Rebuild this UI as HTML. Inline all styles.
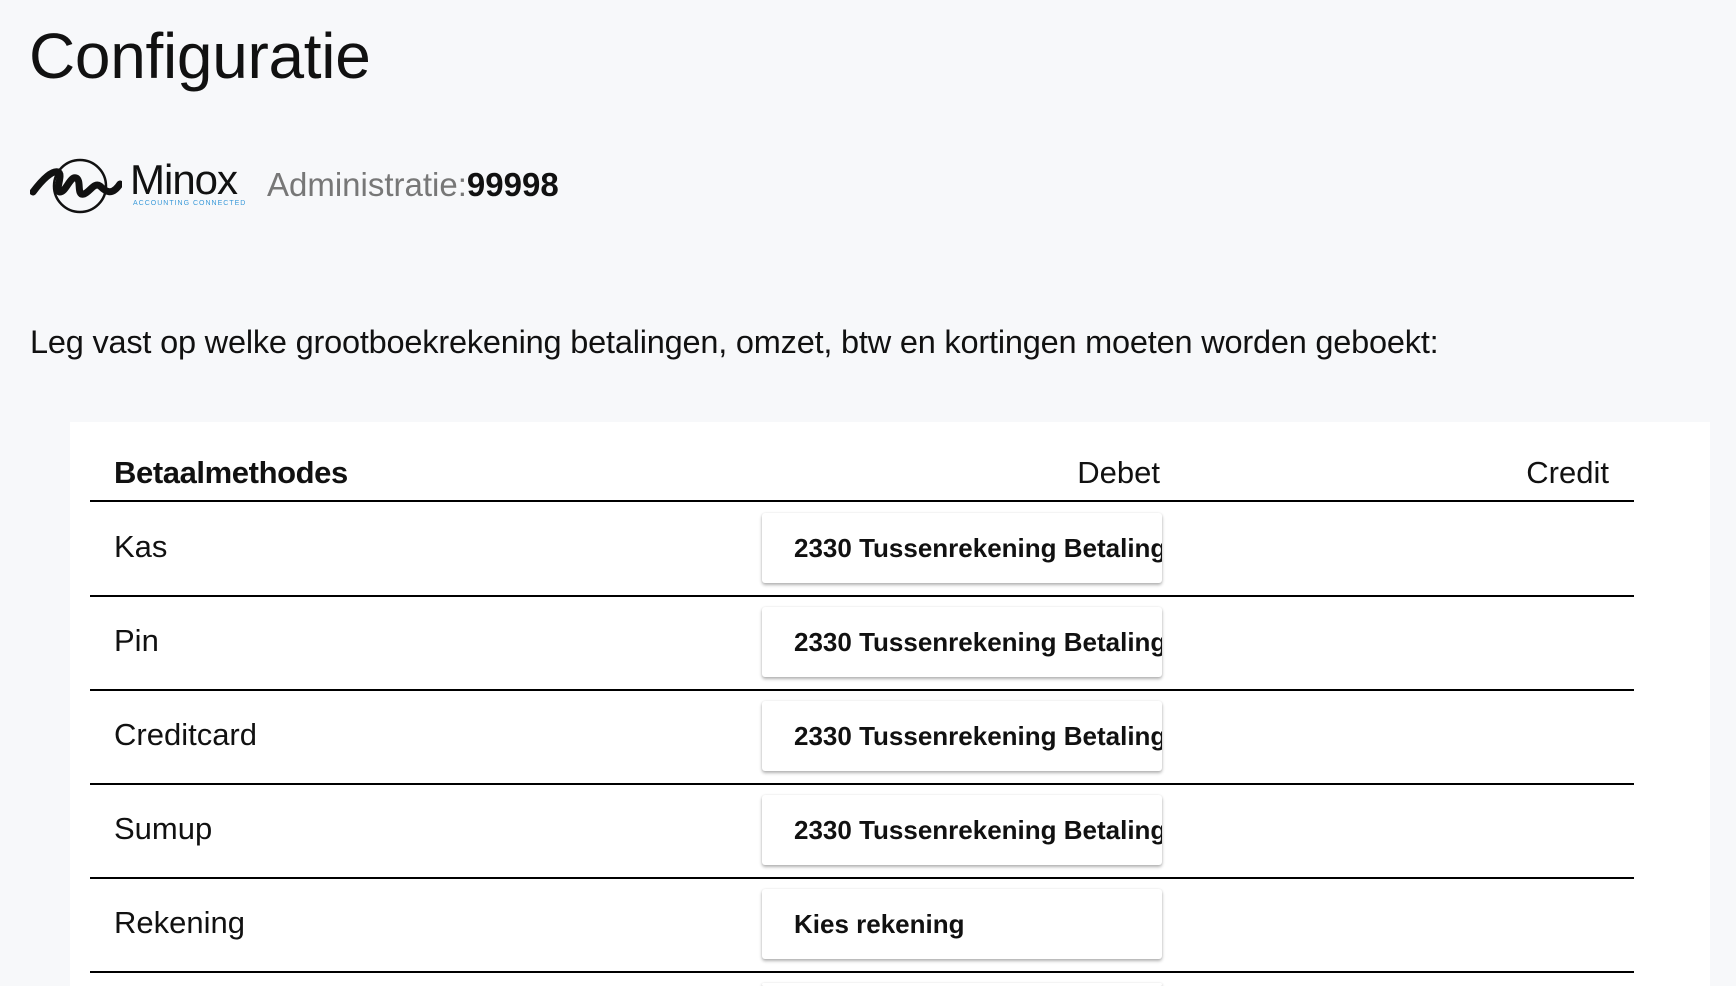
<!DOCTYPE html>
<html><head><meta charset="utf-8"><style>
*{margin:0;padding:0;box-sizing:border-box}
html{width:1736px;height:986px;overflow:hidden}
body{width:1736px;height:986px;background:#f7f8fa;font-family:"Liberation Sans",Arial,sans-serif;color:#111;position:relative;overflow:hidden}
.a{position:absolute;white-space:nowrap}
h1{position:absolute;left:29px;top:19px;font-size:64px;font-weight:400;letter-spacing:-0.3px}
.card{position:absolute;left:70px;top:422px;width:1640px;height:564px;background:#fff}
.line{position:absolute;left:90px;width:1544px;height:2px;background:#000}
.sel{position:absolute;left:762px;width:400px;height:70px;background:#fff;border-radius:3px;box-shadow:0 2px 3px rgba(0,0,0,.3),0 0 2px rgba(0,0,0,.08);overflow:hidden;font-weight:700;font-size:26px;padding-left:32px;line-height:70px;white-space:nowrap}
.lbl{position:absolute;left:114px;font-size:31px;transform:translateY(-50%)}
</style></head><body>
<h1>Configuratie</h1>
<svg class="a" style="left:30px;top:152px" width="92" height="64" viewBox="0 0 92 64">
<circle cx="50" cy="34" r="26" fill="none" stroke="#111" stroke-width="2.5"/>
<path d="M3 40 C12 28 22 18 28 20 C34 22 24 40 30 40 C36 40 40 24 46 26 C52 28 46 44 54 42 C60 40 64 30 70 34 C76 40 82 44 90 32" fill="none" stroke="#111" stroke-width="7" stroke-linecap="round"/>
</svg>
<div class="a" style="left:130px;top:156px;font-size:42px;letter-spacing:-1px">Minox</div>
<div class="a" style="left:133px;top:200px;font-size:7px;color:#3a9ad9;letter-spacing:1px">ACCOUNTING CONNECTED</div>
<div class="a" style="left:267px;top:166px;font-size:33px;color:#777">Administratie:<b style="color:#111">99998</b></div>
<div class="a" style="left:30px;top:324px;font-size:32.5px;letter-spacing:-0.2px">Leg vast op welke grootboekrekening betalingen, omzet, btw en kortingen moeten worden geboekt:</div>
<div class="card"></div>
<div class="a" style="left:114px;top:455px;font-size:31px;font-weight:700;letter-spacing:-0.4px">Betaalmethodes</div>
<div class="a" style="right:576px;top:455px;font-size:31px">Debet</div>
<div class="a" style="right:127px;top:455px;font-size:31px">Credit</div>
<div class="line" style="top:500px"></div>
<div class="lbl" style="top:547px">Kas</div>
<div class="sel" style="top:513px">2330 Tussenrekening Betalingen</div>
<div class="line" style="top:595px"></div>
<div class="lbl" style="top:641px">Pin</div>
<div class="sel" style="top:607px">2330 Tussenrekening Betalingen</div>
<div class="line" style="top:689px"></div>
<div class="lbl" style="top:735px">Creditcard</div>
<div class="sel" style="top:701px">2330 Tussenrekening Betalingen</div>
<div class="line" style="top:783px"></div>
<div class="lbl" style="top:829px">Sumup</div>
<div class="sel" style="top:795px">2330 Tussenrekening Betalingen</div>
<div class="line" style="top:877px"></div>
<div class="lbl" style="top:923px">Rekening</div>
<div class="sel" style="top:889px">Kies rekening</div>
<div class="line" style="top:971px"></div>
<div class="sel" style="top:983px;height:3px"></div>
</body></html>
